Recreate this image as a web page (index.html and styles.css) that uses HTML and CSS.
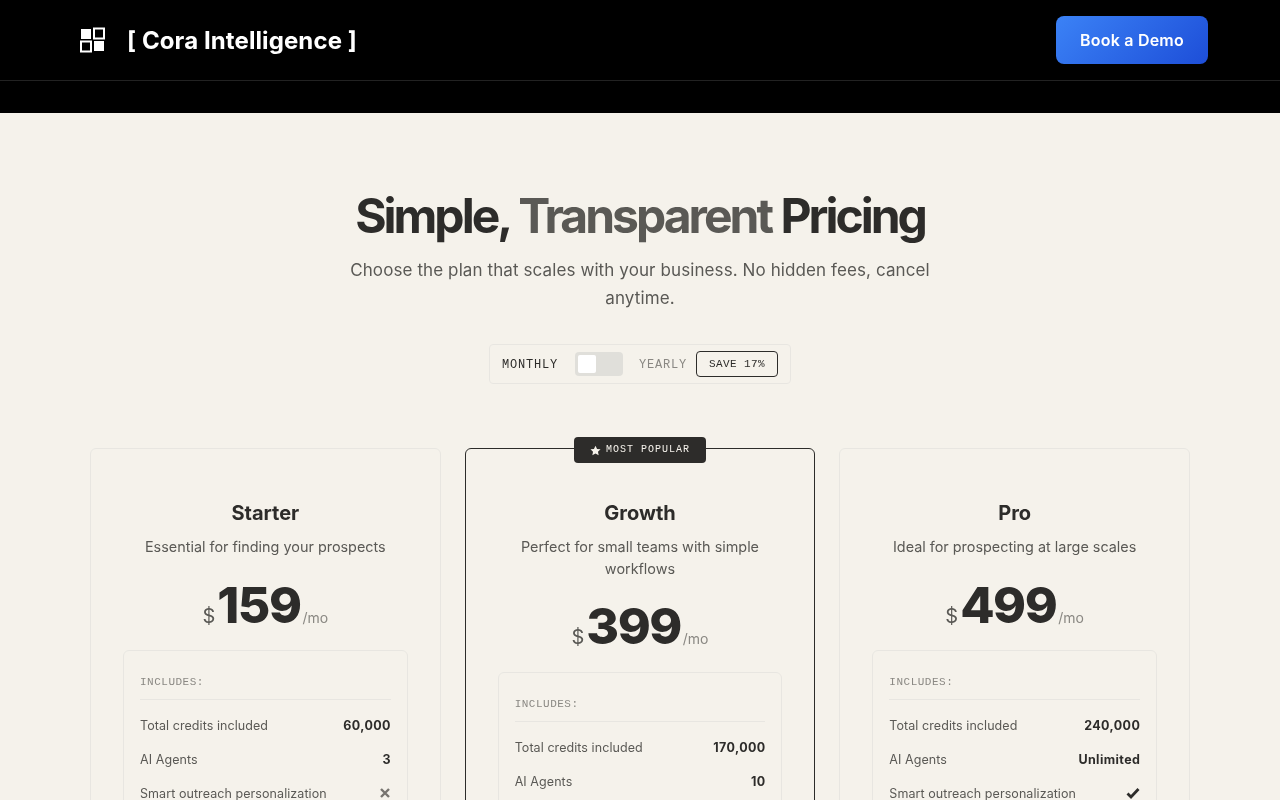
FILE: index.html
```html
<!DOCTYPE html>
<html lang="en">
<head>
    <meta charset="utf-8" />
    <meta name="viewport" content="width=device-width, initial-scale=1" />
    <title>Cora Intelligence - Pricing</title>
    <link rel="stylesheet" href="styles.css">
</head>
<body>

<header class="site-header">
    <div class="nav">
        <a class="brand" href="#">
            <svg class="brand-icon" width="26" height="26" viewBox="0 0 26 26" fill="none">
                <rect x="1" y="2" width="10" height="10" fill="#fff"/>
                <rect x="14" y="1.5" width="10" height="10" stroke="#fff" stroke-width="2"/>
                <rect x="1" y="14.5" width="10" height="10" stroke="#fff" stroke-width="2"/>
                <rect x="14" y="14" width="10" height="10" fill="#fff"/>
            </svg>
            <span class="brand-name">[ Cora Intelligence ]</span>
        </a>
        <a class="demo-button" href="#">Book a Demo</a>
    </div>
</header>

<main class="pricing">
    <div class="intro">
        <h1>Simple, <span class="muted">Transparent</span> Pricing</h1>
        <p>Choose the plan that scales with your business. No hidden fees, cancel anytime.</p>
        <div class="billing">
            <span class="billing-label">MONTHLY</span>
            <span class="switch"><span class="knob"></span></span>
            <span class="billing-label off">YEARLY</span>
            <span class="save">SAVE 17%</span>
        </div>
    </div>

    <div class="plans">
        <section class="plan">
            <h2>Starter</h2>
            <p class="plan-desc">Essential for finding your prospects</p>
            <div class="price"><span class="cur">$</span><span class="num">159</span><span class="per">/mo</span></div>
            <div class="includes">
                <div class="includes-title">INCLUDES:</div>
                <div class="row"><span>Total credits included</span><b>60,000</b></div>
                <div class="row"><span>AI Agents</span><b>3</b></div>
                <div class="row"><span>Smart outreach personalization</span>
                    <svg class="mark" width="12" height="12" viewBox="0 0 12 12"><path d="M2 2l8 8M10 2l-8 8" stroke="#77746f" stroke-width="2.400"/></svg>
                </div>
            </div>
        </section>

        <section class="plan featured">
            <div class="badge">
                <svg width="11" height="11" viewBox="0 0 24 24"><path d="M12 1.500l3.400 7 7.600 1-5.600 5.300 1.500 7.700-6.900-3.800-6.900 3.800 1.500-7.700L1 9.500l7.600-1z" fill="#f5f2eb"/></svg>
                <span class="badge-text">MOST POPULAR</span>
            </div>
            <h2>Growth</h2>
            <p class="plan-desc">Perfect for small teams with simple workflows</p>
            <div class="price"><span class="cur">$</span><span class="num">399</span><span class="per">/mo</span></div>
            <div class="includes">
                <div class="includes-title">INCLUDES:</div>
                <div class="row"><span>Total credits included</span><b>170,000</b></div>
                <div class="row"><span>AI Agents</span><b>10</b></div>
                <div class="row"><span>Smart outreach personalization</span>
                    <svg class="mark" width="14" height="12" viewBox="0 0 14 12"><path d="M1.500 6.500l3.500 3.500 7.500-8" fill="none" stroke="#2d2c2a" stroke-width="2.800"/></svg>
                </div>
            </div>
        </section>

        <section class="plan">
            <h2>Pro</h2>
            <p class="plan-desc">Ideal for prospecting at large scales</p>
            <div class="price"><span class="cur">$</span><span class="num">499</span><span class="per">/mo</span></div>
            <div class="includes">
                <div class="includes-title">INCLUDES:</div>
                <div class="row"><span>Total credits included</span><b>240,000</b></div>
                <div class="row"><span>AI Agents</span><b>Unlimited</b></div>
                <div class="row"><span>Smart outreach personalization</span>
                    <svg class="mark" width="14" height="12" viewBox="0 0 14 12"><path d="M1.500 6.500l3.500 3.500 7.500-8" fill="none" stroke="#2d2c2a" stroke-width="2.800"/></svg>
                </div>
            </div>
        </section>
    </div>
</main>

</body>
</html>
```

FILE: styles.css
```css
* {
    margin: 0;
    padding: 0;
    box-sizing: border-box;
}

html, body {
    width: 100%;
    height: 100%;
}

body {
    overflow: hidden;
    background-color: #f5f2eb;
    color: #2d2c2a;
    font-family: Inter, "Liberation Sans", sans-serif;
}

a {
    text-decoration: none;
}

.site-header {
    height: 113px;
    background-color: #000;
}

.nav {
    height: 81px;
    padding: 0 72px 0 80px;
    display: flex;
    align-items: center;
    justify-content: space-between;
    border-bottom: 1px solid #222;
    will-change: transform;
}

.brand {
    display: flex;
    align-items: center;
    gap: 21px;
}

.brand-name {
    color: #fff;
    font-size: 24px;
    font-weight: 700;
    letter-spacing: 0.100px;
}

.demo-button {
    width: 152px;
    height: 48px;
    display: flex;
    align-items: center;
    justify-content: center;
    border-radius: 8px;
    background: linear-gradient(135deg, #3b82f6, #1d4ed8);
    color: #fff;
    font-size: 16px;
    font-weight: 600;
    letter-spacing: 0.200px;
}

.pricing {
    padding-top: 73px;
    will-change: transform;
}

.intro {
    display: flex;
    flex-direction: column;
    align-items: center;
}

h1 {
    font-size: 48px;
    line-height: 60px;
    font-weight: 700;
    letter-spacing: -3px;
    word-spacing: 1px;
}

.muted {
    color: #5a5955;
}

.intro p {
    width: 600px;
    margin-top: 10px;
    font-size: 17px;
    line-height: 28px;
    letter-spacing: 0.100px;
    color: #5a5955;
    text-align: center;
}

.billing {
    margin-top: 32px;
    height: 40px;
    padding: 0 12px;
    display: flex;
    align-items: center;
    border: 1px solid #e8e6e1;
    border-radius: 4px;
}

.billing-label {
    padding-top: 1px;
    font-family: "Liberation Mono", monospace;
    font-size: 12px;
    letter-spacing: 0.800px;
    width: 57px;
}

.billing-label.off {
    color: #8a8883;
    width: 48px;
}

.switch {
    width: 48px;
    height: 24px;
    margin: 0 16px;
    padding: 3px;
    background-color: #e0dfda;
    border-radius: 4px;
}

.knob {
    display: block;
    width: 18px;
    height: 18px;
    background-color: #fff;
    border-radius: 2px;
}

.save {
    margin-left: 9px;
    width: 82px;
    height: 26px;
    display: flex;
    align-items: center;
    justify-content: center;
    border: 1px solid #2d2c2a;
    border-radius: 4px;
    font-family: "Liberation Mono", monospace;
    font-size: 11px;
    letter-spacing: 0.400px;
}

.plans {
    width: 1100px;
    margin: 64px auto 0;
    display: grid;
    grid-template-columns: repeat(3, 1fr);
    gap: 24px;
    align-items: start;
}

.plan {
    position: relative;
    padding: 50px 32px 32px;
    border: 1px solid #e8e6e1;
    border-radius: 6px;
    text-align: center;
}

.plan.featured {
    border-color: #2d2c2a;
}

.badge {
    position: absolute;
    top: -12px;
    left: 50%;
    transform: translateX(-50%);
    width: 132px;
    height: 26px;
    display: flex;
    align-items: center;
    justify-content: center;
    gap: 5px;
    background-color: #2d2c2a;
    border-radius: 4px;
    color: #f5f2eb;
    font-family: "Liberation Mono", monospace;
    font-size: 10px;
    letter-spacing: 1px;
}

.badge-text {
    margin-top: -2px;
}

h2 {
    font-size: 20px;
    line-height: 28px;
    font-weight: 700;
}

.plan-desc {
    margin-top: 9px;
    font-size: 14.400px;
    line-height: 21.600px;
    color: #5a5955;
}

.price {
    margin-top: 20px;
    height: 55.850px;
    display: flex;
    align-items: baseline;
    justify-content: center;
    gap: 2px;
}

.cur {
    font-size: 20px;
    color: #5a5955;
}

.num {
    font-size: 50px;
    line-height: 54px;
    font-weight: 800;
    letter-spacing: -1.500px;
}

.per {
    font-size: 14px;
    color: #8a8883;
}

.includes {
    margin-top: 17px;
    padding: 25px 16px 16px;
    border: 1px solid #e8e6e1;
    border-radius: 6px;
    text-align: left;
}

.includes-title {
    padding-bottom: 11px;
    margin-bottom: 8px;
    border-bottom: 1px solid #e8e6e1;
    font-family: "Liberation Mono", monospace;
    font-size: 11px;
    line-height: 12px;
    letter-spacing: 0.500px;
    color: #8a8883;
}

.row {
    height: 34px;
    display: flex;
    align-items: center;
    justify-content: space-between;
    font-size: 12.500px;
    letter-spacing: 0.070px;
    color: #5a5955;
}

.row b {
    margin-right: -0.300px;
    font-weight: 700;
    letter-spacing: 0.400px;
    color: #2d2c2a;
}

.mark {
    flex: none;
}
```
